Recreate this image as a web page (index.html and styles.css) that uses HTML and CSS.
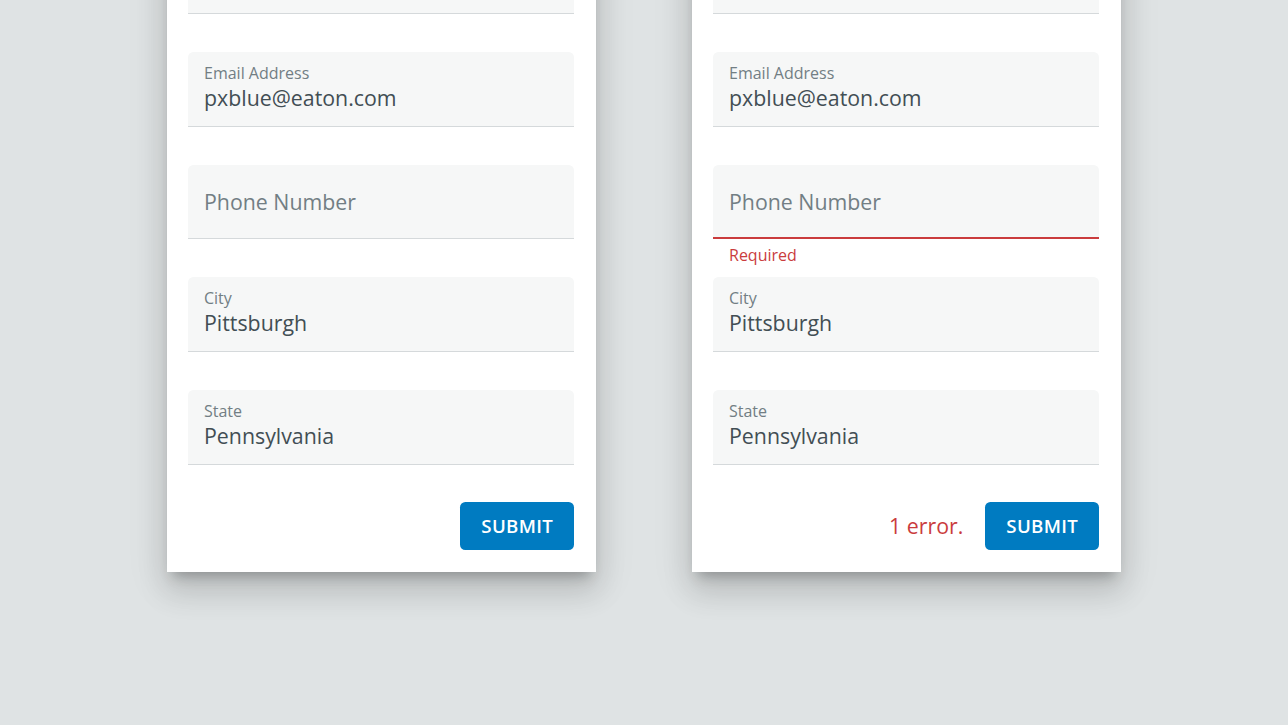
FILE: index.html
```html
<!DOCTYPE html>
<html lang="en">
<head>
<meta charset="utf-8">
<title>Form validation</title>
<link rel="stylesheet" href="styles.css">
</head>
<body>
<main class="stage">
  <section class="card">
    <div class="group"><div class="field"></div></div>
    <div class="group"><div class="field"><span class="label">Email Address</span><span class="value">pxblue@eaton.com</span></div></div>
    <div class="group"><div class="field empty"><span class="placeholder">Phone Number</span></div></div>
    <div class="group"><div class="field"><span class="label">City</span><span class="value">Pittsburgh</span></div></div>
    <div class="group"><div class="field"><span class="label">State</span><span class="value">Pennsylvania</span></div></div>
    <div class="actions"><button class="submit">SUBMIT</button></div>
  </section>
  <section class="card">
    <div class="group"><div class="field"></div></div>
    <div class="group"><div class="field"><span class="label">Email Address</span><span class="value">pxblue@eaton.com</span></div></div>
    <div class="group"><div class="field empty error"><span class="placeholder">Phone Number</span></div><div class="helper">Required</div></div>
    <div class="group"><div class="field"><span class="label">City</span><span class="value">Pittsburgh</span></div></div>
    <div class="group"><div class="field"><span class="label">State</span><span class="value">Pennsylvania</span></div></div>
    <div class="actions"><span class="err-count">1 error.</span><button class="submit">SUBMIT</button></div>
  </section>
</main>
</body>
</html>
```

FILE: styles.css
```css
html, body {
  margin: 0;
  padding: 0;
  height: 100%;
  overflow: hidden;
  background: #dfe3e4;
  font-family: "Open Sans", "Noto Sans", sans-serif;
}

.stage {
  display: flex;
  justify-content: center;
  align-items: flex-start;
  gap: 96px;
  margin-top: -82px;
}

.card {
  width: 429px;
  box-sizing: border-box;
  background: #ffffff;
  padding: 21.33px 22px 22px 21px;
  display: flex;
  flex-direction: column;
  box-shadow: 0 10px 12px -6px rgba(0,0,0,0.24),
              0 20px 28px 2px rgba(0,0,0,0.11),
              0 8px 36px 6px rgba(0,0,0,0.08);
}

.group {
  position: relative;
  height: 112.67px;
}

.field {
  height: 74.67px;
  box-sizing: border-box;
  background: #f6f7f7;
  border-radius: 5.33px 5.33px 0 0;
  border-bottom: 1.33px solid #d5d9db;
  padding: 10.8px 16px 0 16px;
  display: flex;
  flex-direction: column;
}

.field.empty {
  padding-top: 2px;
  justify-content: center;
}

.field.error {
  border-bottom: 2px solid #ca3c3d;
}

.label {
  font-size: 16px;
  line-height: 20px;
  color: #727e84;
}

.value {
  font-size: 21.33px;
  line-height: 29.6px;
  color: #424e54;
}

.placeholder {
  font-size: 21.33px;
  line-height: 28px;
  color: #727e84;
}

.helper {
  margin: 6px 16px 0;
  font-size: 16px;
  line-height: 20px;
  color: #ca3c3d;
}

.actions {
  display: flex;
  justify-content: flex-end;
  align-items: center;
  gap: 22px;
  margin-top: -0.67px;
}

.err-count {
  font-size: 21.33px;
  line-height: 28px;
  color: #ca3c3d;
}

.submit {
  height: 48px;
  padding: 0 21px;
  border: none;
  border-radius: 5.33px;
  background: #007bc1;
  color: #ffffff;
  font-family: "Open Sans", "Noto Sans", sans-serif;
  font-size: 18.67px;
  font-weight: 600;
  letter-spacing: 0.3px;
}
```
